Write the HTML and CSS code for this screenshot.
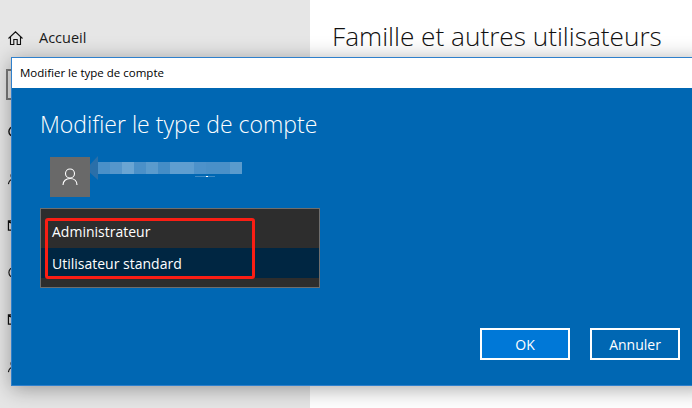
FILE: index.html
```html
<!DOCTYPE html>
<html lang="fr">
<head>
  <meta charset="UTF-8">
  <title>Modifier le type de compte</title>
  <link rel="stylesheet" href="styles.css">
</head>
<body>
  <aside class="sidebar">
    <div class="home">
      <svg class="home-icon" width="15" height="14" viewBox="0 0 15 14" fill="none" stroke="#111" stroke-width="1.1">
        <path d="M.5 7.500 7.500.8l7 6.700M2.500 5.800v7.700h3.300V8.500h3.400v5h3.300V5.800"/>
      </svg>
      <span>Accueil</span>
    </div>
    <div class="search"></div>
    <ul class="nav">
      <li><svg width="14" height="13" viewBox="0 0 14 14" fill="none" stroke="#111" stroke-width="1.5"><circle cx="7" cy="7" r="5.500"/></svg></li>
      <li><svg width="14" height="13" viewBox="0 0 14 14" fill="none" stroke="#111" stroke-width="1.2"><circle cx="7" cy="4" r="3.200"/><path d="M1 13c.5-3.500 3-5.500 6-5.500s5.500 2 6 5.500"/></svg></li>
      <li><svg width="14" height="13" viewBox="0 0 14 14" fill="none" stroke="#111" stroke-width="1.3"><path d="M1 2h12v10H1zM1 2l6 5 6-5"/></svg></li>
      <li><svg width="14" height="13" viewBox="0 0 14 14" fill="none" stroke="#111" stroke-width="1.2"><circle cx="7" cy="7" r="5.500"/><circle cx="7" cy="7" r="1.500" fill="#111"/></svg></li>
      <li><svg width="14" height="13" viewBox="0 0 14 14" fill="none" stroke="#111" stroke-width="1.3"><path d="M1 2h12v10H1zM1 2l6 5 6-5"/></svg></li>
      <li><svg width="14" height="13" viewBox="0 0 14 14" fill="none" stroke="#111" stroke-width="1.2"><circle cx="7" cy="4" r="3.200"/><path d="M1 13c.5-3.500 3-5.500 6-5.500s5.500 2 6 5.500"/></svg></li>
    </ul>
  </aside>

  <main class="content">
    <h1>Famille et autres utilisateurs</h1>
  </main>

  <div class="dialog">
    <div class="titlebar">Modifier le type de compte</div>
    <div class="dialog-body">
      <h2>Modifier le type de compte</h2>
      <div class="account">
        <div class="avatar">
          <svg width="16" height="18" viewBox="0 0 16 18" fill="none" stroke="#fff" stroke-width="1.100">
            <circle cx="8" cy="5.500" r="4.500"/>
            <path d="M1 17c0-4 3-6.500 7-6.500s7 2.500 7 6.500"/>
          </svg>
        </div>
        <div class="name-wedge"></div>
        <div class="blurred-name"></div>
      </div>
      <div class="type-list">
        <div class="type-item">Administrateur</div>
        <div class="type-item selected">Utilisateur standard</div>
        <div class="highlight"></div>
      </div>
      <div class="buttons">
        <button class="primary">OK</button>
        <button>Annuler</button>
      </div>
    </div>
  </div>
</body>
</html>
```

FILE: styles.css
```css
html, body {
  margin: 0;
  height: 100%;
}
body {
  display: flex;
  width: 692px;
  height: 408px;
  overflow: hidden;
  position: relative;
  font-family: "Open Sans", "Noto Sans", sans-serif;
  background: #fff;
}

/* settings window behind the dialog */
.sidebar {
  width: 310px;
  flex: none;
  background: #e6e6e6;
  padding: 30px 0 0 8px;
  box-sizing: border-box;
}
.home {
  display: flex;
  align-items: center;
  gap: 16px;
  height: 15px;
  font-size: 14.5px;
  color: #1a1a1a;
}
.search {
  width: 60px;
  height: 27px;
  margin: 24px 0 0 -2px;
  border: 2px solid #7a7a7a;
}
.nav {
  list-style: none;
  margin: 0;
  padding: 25px 0 0;
  display: flex;
  flex-direction: column;
  gap: 34px;
}
.nav li {
  height: 13px;
  margin-left: -1px;
}
.nav svg {
  display: block;
}
.content {
  flex: 1;
  padding: 19px 0 0 22px;
}
.content h1 {
  margin: 0;
  font-size: 26.2px;
  font-weight: 300;
  line-height: 34px;
  color: #111;
  white-space: nowrap;
}

/* dialog */
.dialog {
  position: absolute;
  left: 11px;
  top: 57px;
  width: 700px;
  height: 329px;
  box-sizing: border-box;
  border: 1px solid #2f80cc;
  background: #0067b3;
  box-shadow: 0 3px 20px rgba(0, 0, 0, 0.35);
  display: flex;
  flex-direction: column;
}
.titlebar {
  height: 30px;
  flex: none;
  background: #fff;
  color: #000;
  font-size: 11.5px;
  line-height: 30px;
  padding-left: 8px;
}
.dialog-body {
  flex: 1;
  padding: 20px 0 0 28px;
  color: #fff;
}
.dialog-body h2 {
  margin: 0;
  font-size: 23px;
  font-weight: 300;
  line-height: 32px;
}
.account {
  display: flex;
  align-items: flex-start;
  margin: 17px 0 0 10px;
}
.avatar {
  width: 40px;
  height: 40px;
  background: #696969;
  display: flex;
  align-items: center;
  justify-content: center;
}
.name-wedge {
  width: 8px;
  height: 24px;
  margin-top: -1px;
  background: #2a6fa9;
  clip-path: polygon(0 35%, 100% 0, 100% 100%, 0 70%);
}
.blurred-name {
  width: 144px;
  height: 15px;
  margin-top: 5px;
  background:
    linear-gradient(#fff, #fff) 108px 14px / 2px 1px no-repeat,
    linear-gradient(#3f8ac4, #3f8ac4) 97px 14px / 20px 1px no-repeat,
    linear-gradient(90deg,
      #4a90c8 0 12px, #5596cb 12px 24px, #6aa5d3 24px 36px,
      #4a90c8 36px 48px, #5a9bcd 48px 60px, #448dc6 60px 72px,
      #5f9ed0 72px 96px, #4d92ca 96px 108px, #4a90c8 108px 132px, #5a9bcd 132px 144px) 0 0 / 100% 12px no-repeat;
}
.type-list {
  position: relative;
  width: 280px;
  height: 80px;
  box-sizing: border-box;
  margin-top: 11px;
  padding: 7px 0 8px;
  border: 1px solid #6e6e6e;
  background: #2d2d2d;
  font-size: 14px;
}
.type-item {
  height: 32px;
  line-height: 32px;
  padding-left: 11px;
}
.type-item.selected {
  height: 30px;
  background: #002642;
}
.highlight {
  position: absolute;
  left: 4px;
  top: 9px;
  width: 210px;
  height: 61px;
  box-sizing: border-box;
  border: 3px solid #fa1e14;
  border-radius: 3px;
}
.buttons {
  display: flex;
  gap: 20px;
  margin: 40px 0 0 440px;
}
.buttons button {
  width: 90px;
  height: 32px;
  padding: 0;
  border: 2px solid #fff;
  background: transparent;
  color: #fff;
  font-family: inherit;
  font-size: 14px;
}
.buttons .primary {
  background: #0078d7;
}
```
